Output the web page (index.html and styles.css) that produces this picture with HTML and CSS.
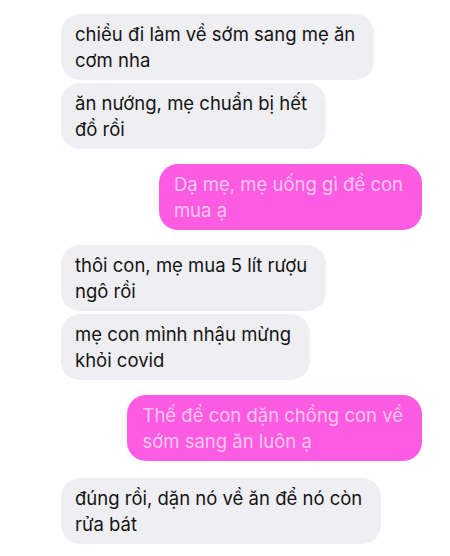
FILE: index.html
```html
<!DOCTYPE html>
<html lang="vi">
<head>
  <meta charset="UTF-8">
  <meta name="viewport" content="width=device-width, initial-scale=1.0">
  <title>Tin nhắn</title>
  <link rel="stylesheet" href="styles.css">
</head>
<body>
  <div class="chat">
    <div class="msg in">chiều đi làm về sớm sang mẹ ăn<br>cơm nha</div>
    <div class="msg in next">ăn nướng, mẹ chuẩn bị hết<br>đồ rồi</div>

    <div class="msg out">Dạ mẹ, mẹ uống gì để con<br>mua ạ</div>

    <div class="msg in">thôi con, mẹ mua 5 lít rượu<br>ngô rồi</div>
    <div class="msg in next">mẹ con mình nhậu mừng<br>khỏi covid</div>

    <div class="msg out">Thế để con dặn chồng con về<br>sớm sang ăn luôn ạ</div>

    <div class="msg in last">đúng rồi, dặn nó về ăn để nó còn<br>rửa bát</div>
  </div>
</body>
</html>
```

FILE: styles.css
```css
body {
  margin: 0;
  background-color: #fff;
  font-family: Inter, "Noto Sans", sans-serif;
}
.chat {
  display: flex;
  flex-direction: column;
  padding: 14px 28px 0 61px;
}
.msg {
  width: fit-content;
  padding: 7px 19px 7px 14px;
  border-radius: 19px;
  font-size: 18.5px;
  line-height: 26px;
  margin-top: 15px;
}
.msg:first-child {
  margin-top: 0;
}
.msg.next {
  margin-top: 3px;
}
.msg.last {
  margin-top: 17px;
}
.in {
  background-color: #efeef2;
  color: #141414;
}
.out {
  align-self: flex-end;
  padding-left: 15px;
  background-color: #fd5ce2;
  color: #fbc6ef;
}
```
